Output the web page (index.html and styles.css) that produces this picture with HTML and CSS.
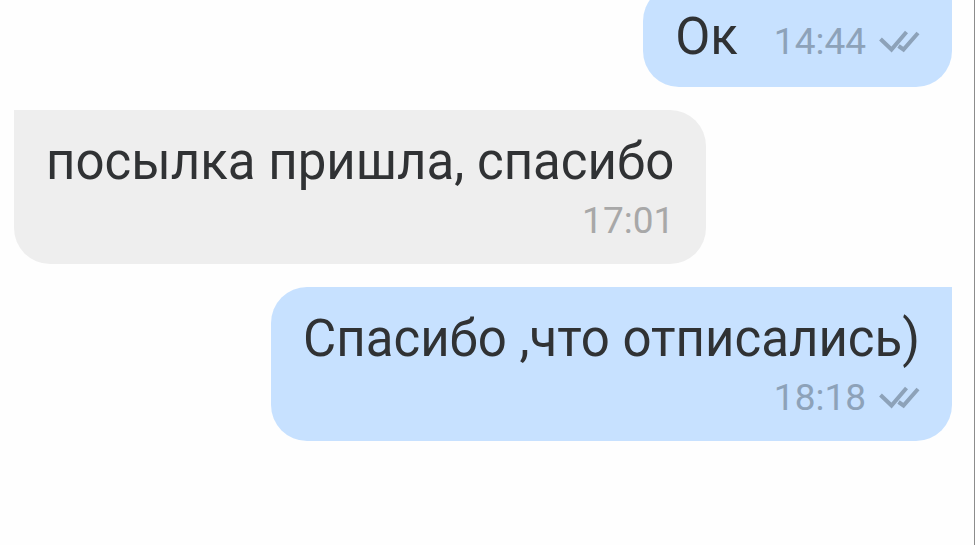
FILE: index.html
```
<!DOCTYPE html>
<html lang="ru">
<head>
    <meta charset="UTF-8">
    <meta name="viewport" content="width=device-width, initial-scale=1.0">
    <title>Чат</title>
    <link rel="stylesheet" href="styles.css">
</head>
<body>
    <main class="chat">
        <div class="message outgoing inline">
            <div class="text">Ок</div>
            <div class="meta">
                <time>14:44</time>
                <svg class="checks" viewBox="0 0 40 24" role="img" aria-label="Прочитано">
                    <path d="M0.5 9L11.5 19.5L26.5 2M18.5 16L23.5 19.5L38 3"/>
                </svg>
            </div>
        </div>

        <div class="message incoming">
            <div class="text">посылка пришла, спасибо</div>
            <div class="meta">
                <time>17:01</time>
            </div>
        </div>

        <div class="message outgoing">
            <div class="text">Спасибо ,что отписались)</div>
            <div class="meta">
                <time>18:18</time>
                <svg class="checks" viewBox="0 0 40 24" role="img" aria-label="Прочитано">
                    <path d="M0.5 9L11.5 19.5L26.5 2M18.5 16L23.5 19.5L38 3"/>
                </svg>
            </div>
        </div>
    </main>
</body>
</html>
```
FILE: styles.css
```
* {
    box-sizing: border-box;
}
body {
    margin: 0;
    background: #fefefe;
    color: #303234;
    font-family: Roboto, sans-serif;
    overflow: hidden;
}
.chat {
    display: flex;
    flex-direction: column;
    gap: 23px;
    min-height: 100vh;
    padding: 0 22px 0 14px;
    border-right: 1px solid #8c8c8c;
}
.message {
    padding: 22px 32px 20px;
    border-radius: 36px;
}
.incoming {
    align-self: flex-start;
    background: #eeeeee;
    border-top-left-radius: 0;
}
.outgoing {
    align-self: flex-end;
    background: #c7e1ff;
    border-top-right-radius: 0;
}
/* short message: the time sits on the text line */
.inline {
    display: flex;
    align-items: baseline;
    gap: 36px;
    margin-top: -15px;
}
.text {
    font-size: 51px;
    line-height: 60px;
}
.meta {
    display: flex;
    justify-content: flex-end;
    align-items: center;
    gap: 14px;
    margin-top: 6px;
    font-size: 37px;
    line-height: 46px;
    color: #a8a8a8;
}
.outgoing .meta {
    color: #8da2b9;
}
.inline .meta {
    margin-top: 0;
}
.checks {
    width: 40px;
    height: 24px;
    fill: none;
    stroke: currentColor;
    stroke-width: 4;
    overflow: visible;
}
```
